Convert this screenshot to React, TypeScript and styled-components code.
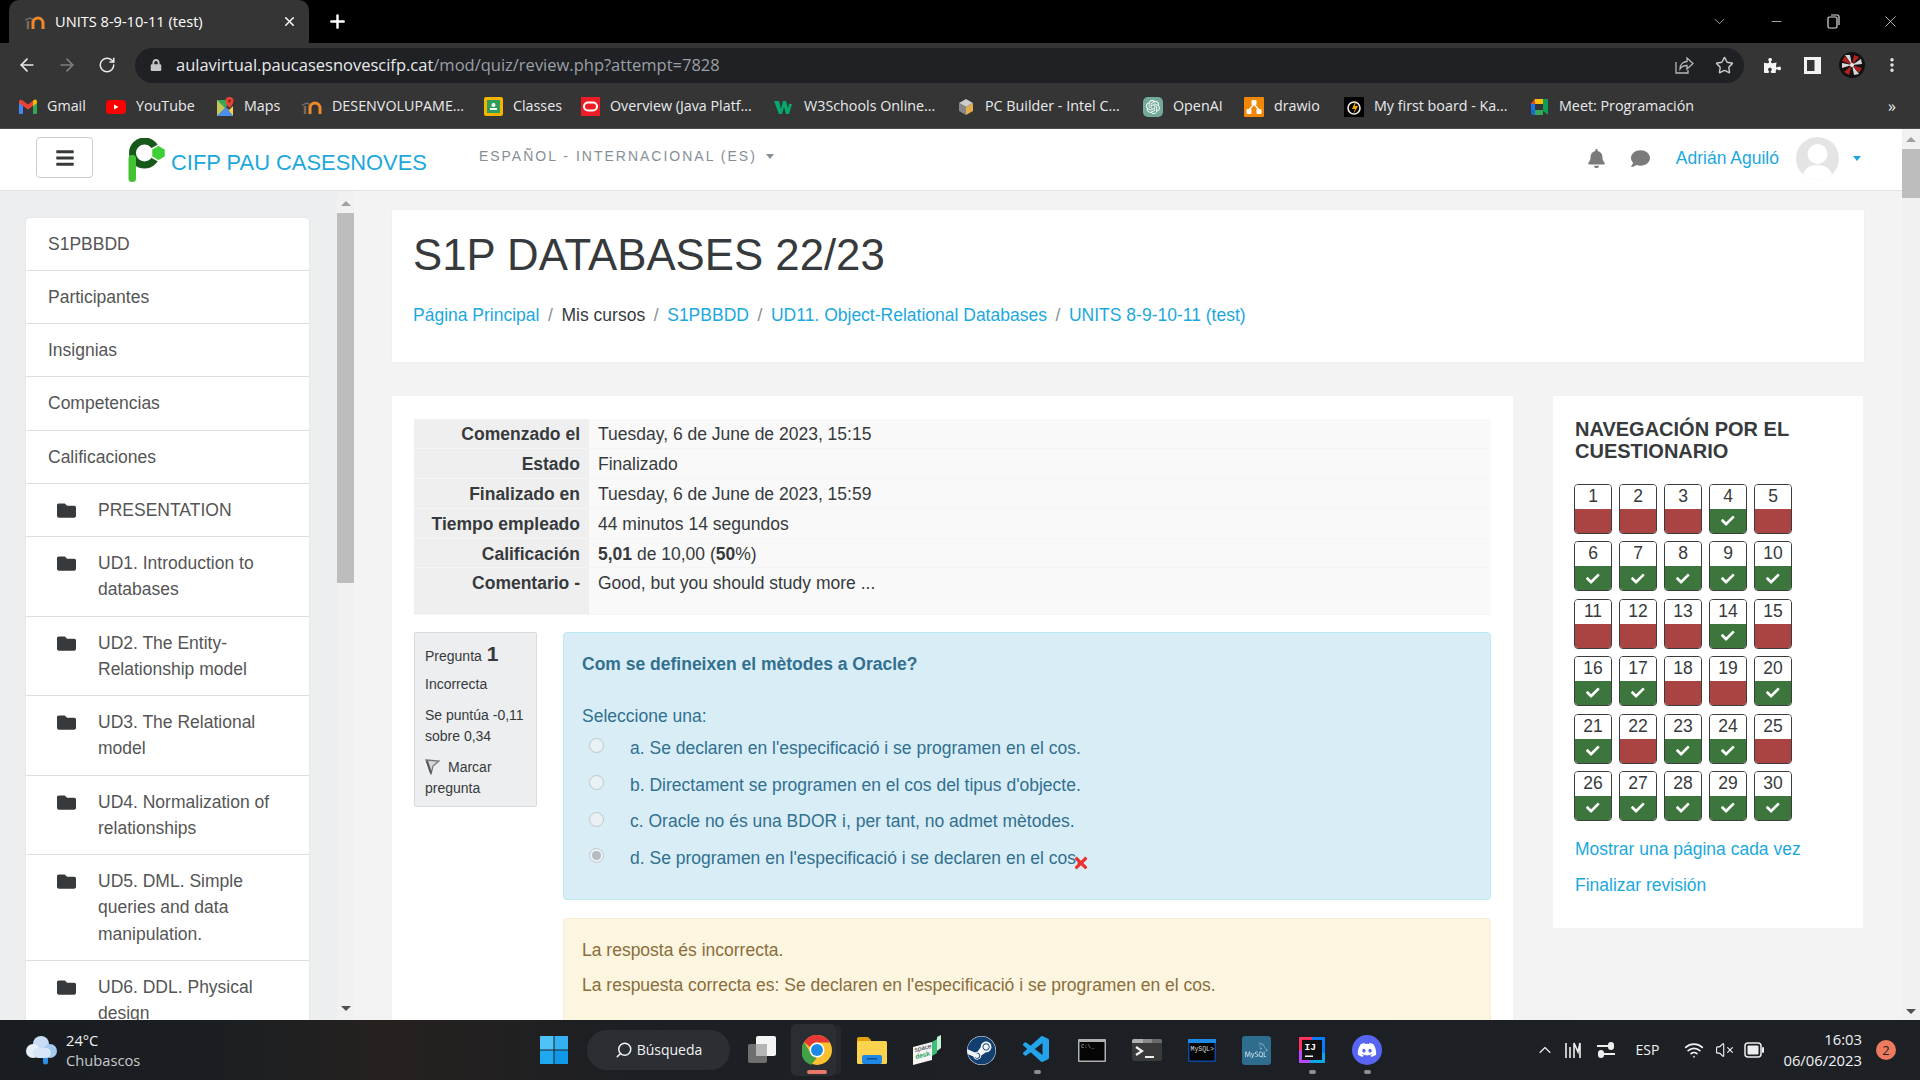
import React from "react";
import styled, { createGlobalStyle } from "styled-components";
import { FaBars, FaBell, FaCheck, FaComment, FaFolder, FaLock, FaPuzzlePiece, FaSteam, FaDiscord, FaTimes } from "react-icons/fa";
import { SiOpenai, SiMysql } from "react-icons/si";
import { VscVscode } from "react-icons/vsc";
import { ArrowLeft, ArrowRight, RotateCw, Plus, X, ChevronDown, Minus, Search, ChevronUp, Wifi, VolumeX, MoreVertical, Star } from "lucide-react";

const GlobalStyle = createGlobalStyle`
  html, body { margin: 0; padding: 0; height: 100%; overflow: hidden; }
  body { font-family: "Liberation Sans", Arial, sans-serif; font-size: 17.5px; line-height: 26.25px; color: #373a3c; }
  * { box-sizing: border-box; }
`;

const Screen = styled.div`
  display: flex;
  flex-direction: column;
  width: 1920px;
  height: 1080px;
  overflow: hidden;
`;

/* ---------- browser chrome ---------- */
const TabStrip = styled.div`
  display: flex;
  align-items: flex-end;
  height: 43px;
  background: #000;
  color: #fff;
  padding-left: 9px;
  font-family: "Open Sans", sans-serif;
  flex: none;
`;
const Tab = styled.div`
  display: flex;
  align-items: center;
  width: 300px;
  height: 43px;
  background: #353535;
  border-radius: 10px 10px 0 0;
  padding: 0 12px 0 16px;
  font-size: 14.6px;
  position: relative;
`;
const TabTitle = styled.span`
  flex: 1;
  margin-left: 10px;
`;
const NewTab = styled.div`
  display: flex;
  align-items: center;
  margin: 0 0 0 18px;
  height: 43px;
`;
const WindowControls = styled.div`
  display: flex;
  align-items: center;
  margin-left: auto;
  height: 43px;
  padding-right: 1px;
`;
const WinButton = styled.div`
  display: flex;
  justify-content: center;
  align-items: center;
  width: 57px;
  height: 40px;
  color: #ddd;
`;
const Toolbar = styled.div`
  display: flex;
  align-items: center;
  height: 42px;
  background: #353535;
  padding: 2px 0 0 7px;
  color: #e8eaed;
  flex: none;
`;
const ToolSlot = styled.div<{ $dim?: boolean }>`
  display: flex;
  justify-content: center;
  align-items: center;
  width: 40px;
  height: 36px;
  flex: none;
  color: ${(p) => (p.$dim ? "#7c7f83" : "#e8eaed")};
`;
const Omnibox = styled.div`
  display: flex;
  align-items: center;
  width: 1609px;
  height: 35px;
  margin: 0 8px 0 8px;
  padding-left: 15px;
  background: #202124;
  border-radius: 18px;
  font-family: "Open Sans", sans-serif;
  font-size: 16.5px;
  flex: none;
`;
const Host = styled.span`
  color: #e8eaed;
  margin-left: 14px;
`;
const UrlPath = styled.span`
  color: #9aa0a6;
  flex: 1;
`;
const BookmarkBar = styled.div`
  display: flex;
  align-items: center;
  height: 44px;
  padding-left: 19px;
  background: #353535;
  border-bottom: 1px solid #4a4a4a;
  color: #e8eaed;
  font-family: "Open Sans", sans-serif;
  font-size: 14.3px;
  flex: none;
`;
const Bookmark = styled.div<{ $w: number }>`
  display: flex;
  align-items: center;
  gap: 10px;
  width: ${(p) => p.$w}px;
  white-space: nowrap;
  flex: none;
`;
const MoreBookmarks = styled.span`
  margin-left: auto;
  margin-right: 24px;
  font-size: 16px;
`;

/* ---------- moodle page ---------- */
const PageFrame = styled.div`
  display: flex;
  flex: 1;
  min-height: 0;
  background: #f3f3f3;
`;
const Page = styled.div`
  display: flex;
  flex-direction: column;
  flex: 1;
  min-width: 0;
`;
const Header = styled.header`
  display: flex;
  align-items: center;
  height: 62px;
  background: #fff;
  border-bottom: 1px solid #e2e2e2;
  padding-left: 36px;
  flex: none;
`;
const MenuButton = styled.div`
  display: flex;
  justify-content: center;
  align-items: center;
  width: 57px;
  height: 41px;
  border: 1px solid #ccc;
  border-radius: 4px;
  color: #373a3c;
  font-size: 20px;
  margin-top: -4px;
`;
const Brand = styled.div`
  display: flex;
  align-items: center;
  margin-left: 35px;
  color: #1ca8dd;
  font-size: 21.9px;
`;
const BrandName = styled.span`
  margin: 8px 0 0 5px;
`;
const Language = styled.div`
  display: flex;
  align-items: center;
  gap: 9px;
  margin: -6px 0 0 52px;
  color: #868e96;
  font-size: 14px;
  letter-spacing: 2px;
`;
const SmallCaret = styled.span<{ $color: string }>`
  width: 0;
  height: 0;
  border-left: 4.5px solid transparent;
  border-right: 4.5px solid transparent;
  border-top: 5px solid ${(p) => p.$color};
`;
const UserMenu = styled.div`
  display: flex;
  align-items: center;
  margin-left: auto;
  padding-right: 41px;
  color: #7a7a7a;
  margin-top: -3px;
`;
const CommentGap = styled.span`
  display: flex;
  margin-left: 25px;
`;
const UserName = styled.span`
  color: #1ca8dd;
  margin: 0 17px 0 26px;
`;
const Avatar = styled.div`
  width: 43px;
  height: 43px;
  border-radius: 50%;
  background: #e4e4e4;
  margin-right: 14px;
  overflow: hidden;
  flex: none;
`;
const Body = styled.div`
  display: flex;
  flex: 1;
  min-height: 0;
`;
const SideColumn = styled.aside`
  width: 337px;
  padding: 26.6px 28px 0 26px;
  background: #eceeef;
  overflow: hidden;
  flex: none;
`;
const SideList = styled.ul`
  list-style: none;
  margin: 0;
  padding: 0;
  background: #fff;
  border-radius: 4px;
  box-shadow: 0 0 2px rgba(0, 0, 0, 0.1);
`;
const SideItem = styled.li<{ $folder?: boolean }>`
  display: flex;
  gap: 22px;
  padding: 13px 22px 13px ${(p) => (p.$folder ? "31px" : "22px")};
  border-bottom: 1px solid #ddd;
  color: #555;
`;
const FolderIcon = styled.span`
  flex: none;
  width: 19px;
  color: #373a3c;
  font-size: 19px;
  line-height: 0;
  padding-top: 4px;
`;
const Scrollbar = styled.div<{ $w: number; $bg: string }>`
  display: flex;
  flex-direction: column;
  align-items: center;
  width: ${(p) => p.$w}px;
  background: ${(p) => p.$bg};
  flex: none;
`;
const Thumb = styled.div<{ $h: number; $mt: number }>`
  width: 100%;
  height: ${(p) => p.$h}px;
  margin-top: ${(p) => p.$mt}px;
  background: #bdbdbd;
`;
const ScrollArrow = styled.div<{ $down?: boolean; $mt?: number }>`
  width: 0;
  height: 0;
  margin-top: ${(p) => p.$mt ?? 0}px;
  border-left: 5px solid transparent;
  border-right: 5px solid transparent;
  ${(p) => (p.$down ? "border-top: 5px solid #505050;" : "border-bottom: 5px solid #a0a0a0;")}
`;
const Main = styled.main`
  flex: 1;
  min-width: 0;
  padding: 19px 38px 0;
  overflow: hidden;
`;
const HeadCard = styled.section`
  height: 152px;
  background: #fff;
  padding: 18px 21px;
  margin-bottom: 34px;
  box-shadow: 0 0 1px rgba(0, 0, 0, 0.08);
`;
const Title = styled.h1`
  margin: 0;
  font-size: 43.75px;
  font-weight: 400;
  line-height: 54px;
  color: #373a3c;
`;
const Crumbs = styled.nav`
  display: flex;
  gap: 8.6px;
  margin-top: 19.5px;
  color: #868e96;
`;
const CrumbLink = styled.span`
  color: #1ca8dd;
`;
const CrumbPlain = styled.span`
  color: #373a3c;
`;
const Columns = styled.div`
  display: flex;
  align-items: flex-start;
  gap: 40px;
`;
const ContentCard = styled.section`
  width: 1121px;
  background: #fff;
  padding: 23px 22px 40px;
  flex: none;
  height: 700px;
`;
const Summary = styled.table`
  width: 100%;
  border-collapse: collapse;
  margin-bottom: 17px;
`;
const SummaryRow = styled.tr`
  border-bottom: 1px solid #f5f5f5;
`;
const SummaryHead = styled.th<{ $tall?: boolean }>`
  width: 175px;
  height: ${(p) => (p.$tall ? "47px" : "29.8px")};
  padding: 2px 9px 0 0;
  text-align: right;
  vertical-align: top;
  background: #efefef;
  font-weight: 700;
  color: #373a3c;
`;
const SummaryCell = styled.td`
  padding: 2px 0 0 9px;
  vertical-align: top;
  background: #f9f9f9;
`;
const Question = styled.div`
  display: flex;
  align-items: flex-start;
  gap: 26px;
`;
const InfoBox = styled.div`
  width: 123px;
  padding: 10px 10px 7px;
  background: #eceeef;
  border: 1px solid #dadada;
  border-radius: 2px;
  font-size: 14px;
  line-height: 21px;
  flex: none;
`;
const InfoLine = styled.div<{ $tight?: boolean }>`
  margin-bottom: ${(p) => (p.$tight ? "6.5px" : "10px")};
`;
const QuestionNo = styled.b`
  font-size: 21px;
  margin-left: 1px;
`;
const FlagWrap = styled.span`
  display: inline-block;
  height: 16px;
  vertical-align: -3px;
  margin-right: 8px;
  line-height: 0;
`;
const Answers = styled.div`
  flex: 1;
  min-width: 0;
`;
const Formulation = styled.div`
  height: 268px;
  padding: 18px 18px 0;
  background: #d9edf7;
  border: 1px solid #bce8f1;
  border-radius: 4px;
  color: #31708f;
`;
const Prompt = styled.div`
  font-weight: 700;
  margin-bottom: 25px;
`;
const OptionList = styled.div`
  margin-top: -4.5px;
`;
const Option = styled.div`
  display: flex;
  align-items: center;
  height: 26px;
  margin-top: 10.7px;
  position: relative;
`;
const Radio = styled.span<{ $checked?: boolean }>`
  display: flex;
  justify-content: center;
  align-items: center;
  width: 15px;
  height: 15px;
  margin: -5px 26px 0 7px;
  border: 1px solid #bfc8cc;
  border-radius: 50%;
  background: #e9f1f5;
  flex: none;
  &::after {
    content: "";
    display: ${(p) => (p.$checked ? "block" : "none")};
    width: 9px;
    height: 9px;
    border-radius: 50%;
    background: #b5bcc0;
  }
`;
const WrongMark = styled.span`
  position: absolute;
  left: 490px;
  top: 9px;
  color: #f0302e;
  font-size: 18px;
  line-height: 0;
`;
const Feedback = styled.div`
  height: 200px;
  margin-top: 18px;
  padding: 18px 18px 0;
  background: #fcf5e0;
  border: 1px solid #f8eed3;
  border-radius: 4px;
  color: #8a6d3b;
`;
const FeedbackLine = styled.p`
  margin: 0 0 8px;
`;
const NavBlock = styled.aside`
  width: 310px;
  height: 532px;
  padding: 22px 22px 0;
  background: #fff;
  flex: none;
`;
const NavTitle = styled.h2`
  margin: 0 0 22px;
  font-size: 20px;
  line-height: 22px;
  font-weight: 700;
  color: #373a3c;
`;
const NavGrid = styled.div`
  display: grid;
  grid-template-columns: repeat(5, 38px);
  grid-auto-rows: 50px;
  column-gap: 7px;
  row-gap: 7.4px;
  margin-left: -1px;
`;
const NavCell = styled.div`
  display: flex;
  flex-direction: column;
  border: 1px solid #3c3c3c;
  border-radius: 4px;
  overflow: hidden;
  text-align: center;
`;
const NavNumber = styled.div`
  height: 24px;
  line-height: 22px;
  background: #fff;
  color: #373a3c;
`;
const NavState = styled.div<{ $ok: boolean }>`
  display: flex;
  justify-content: center;
  align-items: center;
  flex: 1;
  background: ${(p) => (p.$ok ? "#3c763d" : "#a94442")};
  color: #fff;
  font-size: 13.5px;
`;
const NavLink = styled.div`
  color: #1ca8dd;
  margin-top: 9.5px;
`;
const NavLinks = styled.div`
  margin-top: 15px;
`;

/* ---------- windows taskbar ---------- */
const Taskbar = styled.footer`
  display: flex;
  align-items: center;
  height: 60px;
  background: linear-gradient(90deg, #191d22 0%, #1b1f22 12%, #26211f 20%, #1c1f24 34%, #1d2126 100%);
  color: #f2f2f2;
  font-family: "Open Sans", sans-serif;
  flex: none;
`;
const Weather = styled.div`
  display: flex;
  align-items: center;
  gap: 6px;
  width: 540px;
  padding-left: 24px;
  font-size: 14.7px;
  line-height: 20px;
`;
const WeatherSub = styled.div`
  color: #c9c9c9;
`;
const SearchPill = styled.div`
  display: flex;
  align-items: center;
  justify-content: center;
  gap: 4px;
  width: 143px;
  height: 40px;
  margin: 0 4px 0 19px;
  background: #2b2e33;
  border-radius: 20px;
  font-size: 14px;
`;
const TaskSlot = styled.div<{ $active?: boolean }>`
  display: flex;
  justify-content: center;
  align-items: center;
  width: 55px;
  height: 52px;
  flex: none;
  position: relative;
  > svg, > span {
    position: relative;
    z-index: 1;
  }
  ${(p) =>
    p.$active &&
    `
    &::before {
      content: "";
      position: absolute;
      inset: 0 8px 0 2px;
      background: #2a2d31;
      border-radius: 5px;
    }
    &::after {
      content: "";
      position: absolute;
      top: 1px;
      bottom: 1px;
      right: 3px;
      width: 5px;
      background: #25282c;
      border-radius: 0 5px 5px 0;
    }
  `}
`;
const RunDot = styled.span<{ $active?: boolean }>`
  && {
    position: absolute;
  }
  bottom: 2px;
  left: 50%;
  width: ${(p) => (p.$active ? "20px" : "7px")};
  height: 4px;
  margin-left: ${(p) => (p.$active ? "-10px" : "-3px")};
  border-radius: 3px;
  background: ${(p) => (p.$active ? "#e8796a" : "#8b8e92")};
`;
const SteamBadge = styled.span`
  display: flex;
  border-radius: 50%;
  background: #f2f5f8;
  color: #123f70;
`;
const Tray = styled.div`
  display: flex;
  align-items: center;
  margin-left: auto;
  padding-right: 24px;
  font-size: 14px;
`;
const TraySlot = styled.div<{ $w: number }>`
  display: flex;
  justify-content: center;
  align-items: center;
  width: ${(p) => p.$w}px;
  flex: none;
`;
const Clock = styled.div`
  width: 89px;
  text-align: right;
  line-height: 21px;
  font-size: 14.8px;
  white-space: nowrap;
`;
const Badge = styled.div`
  display: flex;
  justify-content: center;
  align-items: center;
  width: 20px;
  height: 20px;
  margin-left: 14px;
  border-radius: 50%;
  background: #ee7a5f;
  color: #222;
  font-size: 13px;
`;

const MoodleIcon = () => (
  <svg width="20" height="18" viewBox="0 0 20 18">
    <path d="M0 7l5-2 3 1.500" stroke="#6b6b6b" strokeWidth="1.4" fill="none" />
    <path d="M3 16V8" stroke="#7a6a5a" strokeWidth="2.4" />
    <path d="M8 16V7.500M8 10a3.800 3.800 0 0 1 10 0v6" stroke="#f0882a" strokeWidth="3" fill="none" />
  </svg>
);

const GmailIcon = () => (
  <svg width="18" height="15" viewBox="0 0 18 15">
    <rect x="0" y="3" width="4" height="12" rx="1" fill="#4285f4" />
    <rect x="14" y="3" width="4" height="12" rx="1" fill="#34a853" />
    <path d="M0 2.500Q0 0 3 1l6 4.500L15 1v5L9 10.500 0 4z" fill="#ea4335" />
    <path d="M14 1.700Q18 -1 18 3v1l-4 3z" fill="#fbbc04" />
  </svg>
);

const YoutubeIcon = () => (
  <svg width="20" height="14" viewBox="0 0 20 14">
    <rect x="0" y="0" width="20" height="14" rx="4" fill="#f00" />
    <path d="M8 4.500l4.500 2.500L8 9.500z" fill="#fff" />
  </svg>
);

const MapsIcon = () => (
  <svg width="18" height="20" viewBox="0 0 18 20">
    <path d="M1 3h10v6L1 19z" fill="#34a853" />
    <path d="M1 19l9-9 7 9z" fill="#4a90f0" />
    <path d="M10 10l3 3 4-4v10z" fill="#fbd04c" />
    <path d="M1 3l8 8-8 8z" fill="#f4d35e" opacity="0.75" />
    <path d="M13.500 0a4 4 0 0 1 4 4c0 3-4 7-4 7s-4-4-4-7a4 4 0 0 1 4-4z" fill="#ea4335" />
    <circle cx="13.500" cy="4" r="1.400" fill="#8a1c14" />
  </svg>
);

const ClassesIcon = () => (
  <svg width="19" height="19" viewBox="0 0 19 19">
    <rect width="19" height="19" rx="2" fill="#f4b400" />
    <rect x="3" y="3" width="13" height="13" fill="#2e9e5b" />
    <circle cx="9.500" cy="8" r="2" fill="#fff" />
    <rect x="6" y="11" width="7" height="2" fill="#fff" />
  </svg>
);

const OracleIcon = () => (
  <svg width="19" height="19" viewBox="0 0 19 19">
    <rect width="19" height="19" fill="#ee1c25" />
    <rect x="3" y="5.500" width="13" height="8" rx="4" fill="none" stroke="#fff" strokeWidth="2" />
  </svg>
);

const W3Icon = () => (
  <svg width="20" height="18" viewBox="0 0 20 18">
    <path d="M0 3h5l2 8 2-8h3l2 8 1-5h3l-3 10h-3l-2-7-2 7H5z" fill="#04aa6d" />
  </svg>
);

const CubeIcon = () => (
  <svg width="18" height="18" viewBox="0 0 18 18">
    <path d="M9 1l7 4-7 4-7-4z" fill="#ccc" />
    <path d="M2 5l7 4v8l-7-4z" fill="#888" />
    <path d="M16 5l-7 4v8l7-4z" fill="#e0b050" />
  </svg>
);

const OpenAiIcon = () => (
  <svg width="20" height="20" viewBox="0 0 20 20">
    <rect width="20" height="20" rx="5" fill="#74aa9c" />
    <g transform="translate(3 3) scale(0.58)">
      <SiOpenai size={24} color="#fff" />
    </g>
  </svg>
);

const DrawioIcon = () => (
  <svg width="20" height="20" viewBox="0 0 20 20">
    <rect width="20" height="20" rx="1" fill="#f08705" />
    <path d="M10 7L5 13M10 7l5 6" stroke="#fff" strokeWidth="1.400" />
    <rect x="7.500" y="3" width="5" height="5" rx="1" fill="#fff" />
    <rect x="2.500" y="12" width="5" height="5" rx="1" fill="#fff" />
    <rect x="12.500" y="12" width="5" height="5" rx="1" fill="#fff" />
  </svg>
);

const BoardIcon = () => (
  <svg width="20" height="20" viewBox="0 0 20 20">
    <rect width="20" height="20" fill="#000" />
    <circle cx="10" cy="11" r="6" fill="none" stroke="#eee" strokeWidth="1.600" />
    <path d="M12 3l-4 9h3l-2 6 5-9h-3z" fill="#f7a600" />
  </svg>
);

const MeetIcon = () => (
  <svg width="19" height="19" viewBox="0 0 19 19">
    <path d="M5 2h8v5H1z" fill="#fbbc04" />
    <path d="M1 7h4v6H1z" fill="#1a73e8" />
    <path d="M1 13h4v5H3a2 2 0 0 1-2-2z" fill="#1967d2" />
    <path d="M5 13h8v5H5z" fill="#34a853" />
    <path d="M13 2l5 0v16l-5-4V5z" fill="#0f9d58" />
    <path d="M5 2l0 5H1z" fill="#ea4335" />
  </svg>
);

const ShareBoxIcon = () => (
  <svg width="20" height="20" viewBox="0 0 20 20" fill="none" stroke="#b4b7ba" strokeWidth="1.300">
    <path d="M2 7v11h12v-3" />
    <path d="M6 14c0-5 3.500-7.500 7-7.500V3l6 5.500-6 5.500v-3.500c-3 0-5.500 1-7 3.500z" />
  </svg>
);

const SidePanelIcon = () => (
  <svg width="17" height="17" viewBox="0 0 17 17">
    <rect x="1.500" y="1.500" width="14" height="14" fill="none" stroke="#f2f2f2" strokeWidth="3" />
    <rect x="10.500" y="1.500" width="5" height="14" fill="#f2f2f2" />
  </svg>
);

const ProfileIcon = () => (
  <svg width="26" height="26" viewBox="0 0 26 26">
    <circle cx="13" cy="13" r="13" fill="#111" />
    <path d="M13 13L6 3h5zM13 13l9-6 1 5zM13 13l7 9-5 1zM13 13L3 16l0-5z" fill="#d8d8d8" />
    <path d="M13 13l2-10 5 2zM13 13l10 3-3 5zM13 13l-3 10-5-3zM13 13L3 9l3-5z" fill="#b32020" />
    <circle cx="13" cy="13" r="2" fill="#eee" />
  </svg>
);

const RestoreIcon = () => (
  <svg width="13" height="15" viewBox="0 0 13 15">
    <rect x="1" y="3" width="9" height="11" rx="1.500" fill="none" stroke="#ddd" strokeWidth="1.200" />
    <path d="M4 1h6a2 2 0 0 1 2 2v8" fill="none" stroke="#ddd" strokeWidth="1.200" />
  </svg>
);

const SchoolLogo = () => (
  <svg width="38" height="44" viewBox="0 0 38 44">
    <circle cx="16.500" cy="15" r="12" fill="none" stroke="#17591a" strokeWidth="7" />
    <rect x="0.500" y="17" width="7.500" height="27" rx="3.500" fill="#45c234" />
    <path d="M30.500 7l7 4v8l-7 4-7-4v-8z" fill="#3ecf36" stroke="#fff" strokeWidth="1.500" />
  </svg>
);

const AvatarFigure = () => (
  <svg width="43" height="43" viewBox="0 0 43 43">
    <circle cx="21.500" cy="17" r="10" fill="#fff" />
    <path d="M6 43c1-12 8-15 15.500-15S36 31 37 43z" fill="#fff" />
  </svg>
);

const FlagIcon = () => (
  <svg width="15" height="16" viewBox="0 0 15 16">
    <path d="M1 1l13 1-6 5-2 8z" fill="#d8d8d8" stroke="#777" strokeWidth="1.300" />
    <path d="M2 2l4 12" stroke="#555" strokeWidth="2" />
  </svg>
);

const CloudIcon = () => (
  <svg width="36" height="36" viewBox="0 0 36 36">
    <path d="M19 24v6a2.500 2.500 0 0 0 5 0v-6z" fill="#2e8fe8" />
    <circle cx="17" cy="12" r="8" fill="#c8ddf5" />
    <circle cx="9" cy="19" r="7" fill="#e6eefa" />
    <circle cx="26" cy="19" r="7" fill="#a6c9f0" />
    <rect x="9" y="16" width="18" height="10" rx="5" fill="#d6e5f8" />
  </svg>
);

const WindowsLogo = () => (
  <svg width="28" height="28" viewBox="0 0 28 28">
    <rect x="0" y="0" width="13.500" height="13.500" fill="#4fc3f7" />
    <rect x="14.500" y="0" width="13.500" height="13.500" fill="#35b0f2" />
    <rect x="0" y="14.500" width="13.500" height="13.500" fill="#1ea8f0" />
    <rect x="14.500" y="14.500" width="13.500" height="13.500" fill="#0f97e8" />
  </svg>
);

const TaskViewIcon = () => (
  <svg width="30" height="30" viewBox="0 0 30 30">
    <rect x="1" y="9" width="19" height="19" rx="2" fill="#6f6f6f" />
    <rect x="9" y="1" width="20" height="20" rx="2" fill="#f4f4f4" />
    <rect x="9" y="9" width="11" height="12" fill="#b5b5b5" />
  </svg>
);

const ChromeIcon = () => (
  <svg width="30" height="30" viewBox="0 0 30 30">
    <circle cx="15" cy="15" r="15" fill="#fbc02d" />
    <path d="M15 0a15 15 0 0 1 13 7.500H15a7.500 7.500 0 0 0-7 4.500L2 7a15 15 0 0 1 13-7z" fill="#e53935" />
    <path d="M2 7l6.500 11a7.500 7.500 0 0 0 6.500 4.500L9 30A15 15 0 0 1 2 7z" fill="#43a047" />
    <circle cx="15" cy="15" r="7.500" fill="#fff" />
    <circle cx="15" cy="15" r="6" fill="#1e88e5" />
  </svg>
);

const FilesIcon = () => (
  <svg width="30" height="27" viewBox="0 0 30 27">
    <path d="M0 2a2 2 0 0 1 2-2h9l3 3v6H0z" fill="#e3a008" />
    <rect x="0" y="4" width="30" height="23" rx="1.500" fill="#fcd34d" />
    <rect x="5" y="18" width="20" height="9" rx="2" fill="#1e88e5" />
    <rect x="10" y="21" width="10" height="1.500" fill="#0d4f8b" />
  </svg>
);

const SpacedeskIcon = () => (
  <svg width="30" height="30" viewBox="0 0 30 30">
    <path d="M20 7l5-3v14l-5 3z" fill="#3fbf75" />
    <path d="M25 2l4-2v13l-4 3z" fill="#c8f0d5" />
    <path d="M1 12l19-5v18L1 30z" fill="#f4f4f4" />
    <text x="3" y="17" fontSize="6.500" fill="#333" fontFamily="Liberation Sans" transform="rotate(-14 3 17)">space</text>
    <text x="4" y="24" fontSize="6.500" fontWeight="700" fill="#1f9e57" fontFamily="Liberation Sans" transform="rotate(-14 4 24)">desk</text>
  </svg>
);

const CmdIcon = () => (
  <svg width="28" height="23" viewBox="0 0 28 23">
    <rect width="28" height="23" rx="1" fill="#b0b0b0" />
    <rect x="1.500" y="3" width="25" height="18.500" fill="#050505" />
    <text x="3" y="9" fontSize="5.500" fill="#bbb" fontFamily="Liberation Mono">C:\_</text>
  </svg>
);

const PowerIcon = () => (
  <svg width="30" height="22" viewBox="0 0 30 22">
    <rect width="30" height="22" rx="2" fill="#3a3a3a" />
    <path d="M2 0h9v4H0V2a2 2 0 0 1 2-2z" fill="#b0b0b0" />
    <rect x="11" y="0" width="9" height="4" fill="#8a8a8a" />
    <path d="M20 0h8a2 2 0 0 1 2 2v2H20z" fill="#6a6a6a" />
    <path d="M4 8l6 4-6 4" fill="none" stroke="#f0f0f0" strokeWidth="2.200" />
    <path d="M13 18h9" stroke="#f0f0f0" strokeWidth="2" />
  </svg>
);

const MysqlConsoleIcon = () => (
  <svg width="28" height="23" viewBox="0 0 28 23">
    <rect width="28" height="23" rx="1" fill="#0d47a1" />
    <rect x="0" y="0" width="28" height="4" fill="#1e88e5" />
    <rect x="1.500" y="4" width="25" height="17.500" fill="#050505" />
    <text x="2.500" y="12" fontSize="6.500" fill="#ddd" fontFamily="Liberation Mono">MySQL&gt;</text>
  </svg>
);

const WorkbenchIcon = () => (
  <svg width="29" height="29" viewBox="0 0 29 29">
    <rect width="29" height="29" rx="3" fill="#2f6d8f" />
    <g transform="translate(3 3)">
      <SiMysql size={23} color="#c0d8e6" />
    </g>
  </svg>
);

const IntellijIcon = () => (
  <svg width="26" height="26" viewBox="0 0 26 26">
    <rect width="26" height="26" fill="#000" />
    <path d="M0 0h13v3H3v10H0z" fill="#fe315d" />
    <path d="M26 0v16h-3V3H13V0z" fill="#087cfa" />
    <path d="M0 13h3v10h8v3H0z" fill="#b74af7" />
    <path d="M26 16v10H11v-3h12v-7z" fill="#0ea5e9" />
    <rect x="3" y="3" width="20" height="20" fill="#111" />
    <text x="5.500" y="13" fontSize="9.500" fontWeight="700" fill="#fff" fontFamily="Liberation Mono">IJ</text>
    <rect x="6" y="18.500" width="8" height="1.500" fill="#fff" />
  </svg>
);

const BatteryIcon = () => (
  <svg width="20" height="16" viewBox="0 0 20 16">
    <rect x="1" y="1" width="16" height="14" rx="3" fill="none" stroke="#eee" strokeWidth="1.500" />
    <rect x="3.500" y="3.500" width="11" height="9" rx="1" fill="#eee" />
    <rect x="18" y="5" width="2" height="6" rx="1" fill="#eee" />
  </svg>
);

const NetUsageIcon = () => (
  <svg width="20" height="18" viewBox="0 0 20 18">
    <path d="M2 2v15M6 6v11M10 17V2l4 9 2-9v15" fill="none" stroke="#eee" strokeWidth="1.600" />
  </svg>
);

const SlidersIcon = () => (
  <svg width="20" height="20" viewBox="0 0 20 20">
    <path d="M1 6h12M7 14h12" stroke="#eee" strokeWidth="2" />
    <rect x="12" y="2" width="6" height="8" rx="3" fill="#eee" />
    <rect x="2" y="10" width="6" height="8" rx="3" fill="#eee" />
  </svg>
);

const bookmarks: { label: string; w: number; icon: React.ReactNode }[] = [
  { label: "Gmail", w: 87, icon: <GmailIcon /> },
  { label: "YouTube", w: 110, icon: <YoutubeIcon /> },
  { label: "Maps", w: 86, icon: <MapsIcon /> },
  { label: "DESENVOLUPAME...", w: 182, icon: <MoodleIcon /> },
  { label: "Classes", w: 97, icon: <ClassesIcon /> },
  { label: "Overview (Java Platf...", w: 193, icon: <OracleIcon /> },
  { label: "W3Schools Online...", w: 183, icon: <W3Icon /> },
  { label: "PC Builder - Intel C...", w: 186, icon: <CubeIcon /> },
  { label: "OpenAI", w: 101, icon: <OpenAiIcon /> },
  { label: "drawio", w: 100, icon: <DrawioIcon /> },
  { label: "My first board - Ka...", w: 186, icon: <BoardIcon /> },
  { label: "Meet: Programación", w: 200, icon: <MeetIcon /> },
];

const sideItems: { label: string; folder?: boolean }[] = [
  { label: "S1PBBDD" },
  { label: "Participantes" },
  { label: "Insignias" },
  { label: "Competencias" },
  { label: "Calificaciones" },
  { label: "PRESENTATION", folder: true },
  { label: "UD1. Introduction to databases", folder: true },
  { label: "UD2. The Entity-Relationship model", folder: true },
  { label: "UD3. The Relational model", folder: true },
  { label: "UD4. Normalization of relationships", folder: true },
  { label: "UD5. DML. Simple queries and data manipulation.", folder: true },
  { label: "UD6. DDL. Physical design", folder: true },
];

const summary: [string, React.ReactNode][] = [
  ["Comenzado el", "Tuesday, 6 de June de 2023, 15:15"],
  ["Estado", "Finalizado"],
  ["Finalizado en", "Tuesday, 6 de June de 2023, 15:59"],
  ["Tiempo empleado", "44 minutos 14 segundos"],
  ["Calificación", <><b>5,01</b> de 10,00 (<b>50</b>%)</>],
];

const options = [
  "a. Se declaren en l'especificació i se programen en el cos.",
  "b. Directament se programen en el cos del tipus d'objecte.",
  "c. Oracle no és una BDOR i, per tant, no admet mètodes.",
  "d. Se programen en l'especificació i se declaren en el cos.",
];

const correct = [4, 6, 7, 8, 9, 10, 14, 16, 17, 20, 21, 23, 24, 26, 27, 28, 29, 30];

const taskIcons: { icon: React.ReactNode; dot?: boolean; active?: boolean }[] = [
  { icon: <TaskViewIcon /> },
  { icon: <ChromeIcon />, dot: true, active: true },
  { icon: <FilesIcon /> },
  { icon: <SpacedeskIcon /> },
  {
    icon: (
      <SteamBadge>
        <FaSteam size={29} />
      </SteamBadge>
    ),
  },
  { icon: <VscVscode size={32} color="#23a3ea" />, dot: true },
  { icon: <CmdIcon /> },
  { icon: <PowerIcon /> },
  { icon: <MysqlConsoleIcon /> },
  { icon: <WorkbenchIcon /> },
  { icon: <IntellijIcon />, dot: true },
  {
    icon: (
      <svg width="30" height="30" viewBox="0 0 30 30">
        <circle cx="15" cy="15" r="15" fill="#5865f2" />
        <g transform="translate(5 5)">
          <FaDiscord size={20} color="#fff" />
        </g>
      </svg>
    ),
    dot: true,
  },
];

const App = () => {
  return (
    <Screen>
      <GlobalStyle />
      <TabStrip>
        <Tab>
          <MoodleIcon />
          <TabTitle>UNITS 8-9-10-11 (test)</TabTitle>
          <X size={15} strokeWidth={2.4} />
        </Tab>
        <NewTab>
          <Plus size={21} strokeWidth={2.8} />
        </NewTab>
        <WindowControls>
          <WinButton>
            <ChevronDown size={17} strokeWidth={1} />
          </WinButton>
          <WinButton>
            <Minus size={15} strokeWidth={1.2} />
          </WinButton>
          <WinButton>
            <RestoreIcon />
          </WinButton>
          <WinButton>
            <X size={19} strokeWidth={1} />
          </WinButton>
        </WindowControls>
      </TabStrip>
      <Toolbar>
        <ToolSlot>
          <ArrowLeft size={20} />
        </ToolSlot>
        <ToolSlot $dim>
          <ArrowRight size={20} />
        </ToolSlot>
        <ToolSlot>
          <RotateCw size={18} />
        </ToolSlot>
        <Omnibox>
          <FaLock size={12} color="#c4c7ca" />
          <Host>aulavirtual.paucasesnovescifp.cat</Host>
          <UrlPath>/mod/quiz/review.php?attempt=7828</UrlPath>
          <ToolSlot>
            <ShareBoxIcon />
          </ToolSlot>
          <ToolSlot>
            <Star size={19} color="#c8cacc" strokeWidth={1.8} />
          </ToolSlot>
        </Omnibox>
        <ToolSlot>
          <FaPuzzlePiece size={17} color="#f5f5f5" />
        </ToolSlot>
        <ToolSlot>
          <SidePanelIcon />
        </ToolSlot>
        <ToolSlot>
          <ProfileIcon />
        </ToolSlot>
        <ToolSlot>
          <MoreVertical size={18} strokeWidth={2.6} />
        </ToolSlot>
      </Toolbar>
      <BookmarkBar>
        {bookmarks.map((b) => (
          <Bookmark key={b.label} $w={b.w}>
            {b.icon}
            {b.label}
          </Bookmark>
        ))}
        <MoreBookmarks>»</MoreBookmarks>
      </BookmarkBar>

      <PageFrame>
        <Page>
          <Header>
            <MenuButton>
              <FaBars />
            </MenuButton>
            <Brand>
              <SchoolLogo />
              <BrandName>CIFP PAU CASESNOVES</BrandName>
            </Brand>
            <Language>
              ESPAÑOL - INTERNACIONAL (ES)
              <SmallCaret $color="#868e96" />
            </Language>
            <UserMenu>
              <FaBell size={19} />
              <CommentGap>
                <FaComment size={19} />
              </CommentGap>
              <UserName>Adrián Aguiló</UserName>
              <Avatar>
                <AvatarFigure />
              </Avatar>
              <SmallCaret $color="#1ca8dd" />
            </UserMenu>
          </Header>
          <Body>
            <SideColumn>
              <SideList>
                {sideItems.map((s) => (
                  <SideItem key={s.label} $folder={s.folder}>
                    {s.folder && (
                      <FolderIcon>
                        <FaFolder />
                      </FolderIcon>
                    )}
                    <span>{s.label}</span>
                  </SideItem>
                ))}
              </SideList>
            </SideColumn>
            <Scrollbar $w={17} $bg="#f1f1f1">
              <ScrollArrow $mt={10} />
              <Thumb $h={370} $mt={7} />
              <ScrollArrow $down $mt={423} />
            </Scrollbar>
            <Main>
              <HeadCard>
                <Title>S1P DATABASES 22/23</Title>
                <Crumbs>
                  <CrumbLink>Página Principal</CrumbLink>/<CrumbPlain>Mis cursos</CrumbPlain>/
                  <CrumbLink>S1PBBDD</CrumbLink>/<CrumbLink>UD11. Object-Relational Databases</CrumbLink>/
                  <CrumbLink>UNITS 8-9-10-11 (test)</CrumbLink>
                </Crumbs>
              </HeadCard>
              <Columns>
                <ContentCard>
                  <Summary>
                    <tbody>
                      {summary.map(([k, v]) => (
                        <SummaryRow key={k}>
                          <SummaryHead>{k}</SummaryHead>
                          <SummaryCell>{v}</SummaryCell>
                        </SummaryRow>
                      ))}
                      <SummaryRow>
                        <SummaryHead $tall>Comentario -</SummaryHead>
                        <SummaryCell>Good, but you should study more ...</SummaryCell>
                      </SummaryRow>
                    </tbody>
                  </Summary>
                  <Question>
                    <InfoBox>
                      <InfoLine $tight>
                        Pregunta <QuestionNo>1</QuestionNo>
                      </InfoLine>
                      <InfoLine>Incorrecta</InfoLine>
                      <InfoLine>Se puntúa -0,11 sobre 0,34</InfoLine>
                      <div>
                        <FlagWrap>
                          <FlagIcon />
                        </FlagWrap>
                        Marcar pregunta
                      </div>
                    </InfoBox>
                    <Answers>
                      <Formulation>
                        <Prompt>Com se defineixen el mètodes a Oracle?</Prompt>
                        <div>Seleccione una:</div>
                        <OptionList>
                          {options.map((o, i) => (
                            <Option key={o}>
                              <Radio $checked={i === 3} />
                              {o}
                              {i === 3 && (
                                <WrongMark>
                                  <FaTimes />
                                </WrongMark>
                              )}
                            </Option>
                          ))}
                        </OptionList>
                      </Formulation>
                      <Feedback>
                        <FeedbackLine>La resposta és incorrecta.</FeedbackLine>
                        <FeedbackLine>La respuesta correcta es: Se declaren en l'especificació i se programen en el cos.</FeedbackLine>
                      </Feedback>
                    </Answers>
                  </Question>
                </ContentCard>
                <NavBlock>
                  <NavTitle>NAVEGACIÓN POR EL CUESTIONARIO</NavTitle>
                  <NavGrid>
                    {Array.from({ length: 30 }, (_, i) => i + 1).map((n) => {
                      const ok = correct.includes(n);
                      return (
                        <NavCell key={n}>
                          <NavNumber>{n}</NavNumber>
                          <NavState $ok={ok}>{ok && <FaCheck />}</NavState>
                        </NavCell>
                      );
                    })}
                  </NavGrid>
                  <NavLinks>
                    <NavLink>Mostrar una página cada vez</NavLink>
                    <NavLink>Finalizar revisión</NavLink>
                  </NavLinks>
                </NavBlock>
              </Columns>
            </Main>
          </Body>
        </Page>
        <Scrollbar $w={18} $bg="#f1f1f1">
          <ScrollArrow $mt={8} />
          <Thumb $h={49} $mt={7} />
          <ScrollArrow $down $mt={811} />
        </Scrollbar>
      </PageFrame>

      <Taskbar>
        <Weather>
          <CloudIcon />
          <div>
            <div>24°C</div>
            <WeatherSub>Chubascos</WeatherSub>
          </div>
        </Weather>
        <WindowsLogo />
        <SearchPill>
          <Search size={18} style={{ transform: "scaleX(-1)" }} />
          Búsqueda
        </SearchPill>
        {taskIcons.map((t, i) => (
          <TaskSlot key={i} $active={t.active}>
            {t.icon}
            {t.dot && <RunDot $active={t.active} />}
          </TaskSlot>
        ))}
        <Tray>
          <TraySlot $w={29}>
            <ChevronUp size={20} strokeWidth={1.3} />
          </TraySlot>
          <TraySlot $w={29}>
            <NetUsageIcon />
          </TraySlot>
          <TraySlot $w={35}>
            <SlidersIcon />
          </TraySlot>
          <TraySlot $w={49}>ESP</TraySlot>
          <TraySlot $w={43}>
            <Wifi size={20} />
          </TraySlot>
          <TraySlot $w={19}>
            <VolumeX size={20} strokeWidth={1.4} />
          </TraySlot>
          <TraySlot $w={39}>
            <BatteryIcon />
          </TraySlot>
          <Clock>
            16:03
            <br />
            06/06/2023
          </Clock>
          <Badge>2</Badge>
        </Tray>
      </Taskbar>
    </Screen>
  );
};

export default App;
